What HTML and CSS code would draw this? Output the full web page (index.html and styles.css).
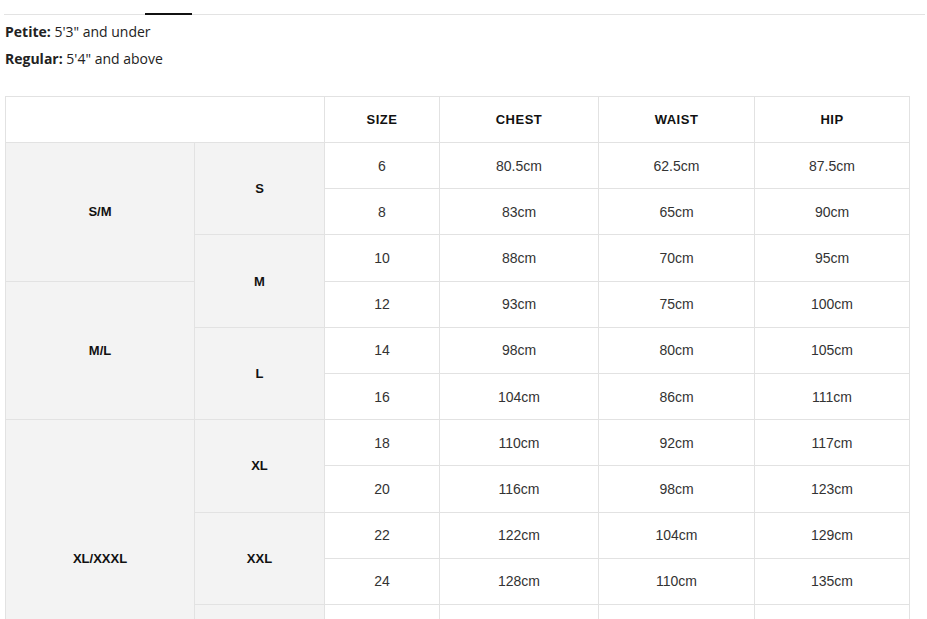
FILE: index.html
```html
<!DOCTYPE html>
<html>
<head>
<meta charset="utf-8">
<link rel="stylesheet" href="styles.css">
</head>
<body>
<div class="tabs"><span class="tab-active"></span></div>
<div class="fit">
  <p><b>Petite:</b> 5'3" and under</p>
  <p><b>Regular:</b> 5'4" and above</p>
</div>
<table class="chart">
  <colgroup>
    <col class="c1"><col class="c2"><col class="c3"><col class="c4"><col class="c5"><col class="c6">
  </colgroup>
  <tr class="head"><th colspan="2"></th><th>SIZE</th><th>CHEST</th><th>WAIST</th><th>HIP</th></tr>
  <tr><td class="grp" rowspan="3">S/M</td><td class="grp" rowspan="2">S</td><td>6</td><td>80.5cm</td><td>62.5cm</td><td>87.5cm</td></tr>
  <tr><td>8</td><td>83cm</td><td>65cm</td><td>90cm</td></tr>
  <tr><td class="grp" rowspan="2">M</td><td>10</td><td>88cm</td><td>70cm</td><td>95cm</td></tr>
  <tr><td class="grp" rowspan="3">M/L</td><td>12</td><td>93cm</td><td>75cm</td><td>100cm</td></tr>
  <tr><td class="grp" rowspan="2">L</td><td>14</td><td>98cm</td><td>80cm</td><td>105cm</td></tr>
  <tr><td>16</td><td>104cm</td><td>86cm</td><td>111cm</td></tr>
  <tr><td class="grp" rowspan="6">XL/XXXL</td><td class="grp" rowspan="2">XL</td><td>18</td><td>110cm</td><td>92cm</td><td>117cm</td></tr>
  <tr><td>20</td><td>116cm</td><td>98cm</td><td>123cm</td></tr>
  <tr><td class="grp" rowspan="2">XXL</td><td>22</td><td>122cm</td><td>104cm</td><td>129cm</td></tr>
  <tr><td>24</td><td>128cm</td><td>110cm</td><td>135cm</td></tr>
  <tr><td class="grp" rowspan="2"></td><td></td><td></td><td></td><td></td></tr>
  <tr><td></td><td></td><td></td><td></td></tr>
</table>
</body>
</html>
```
FILE: styles.css
```css
html, body {
  margin: 0;
  padding: 0;
  background: #fff;
}
body {
  font-family: "Liberation Sans", Arial, sans-serif;
  color: #222;
  overflow: hidden;
}
.tabs {
  margin: 13px 2px 0 4px;
  height: 1px;
  border-bottom: 1px solid #e3e3e3;
  position: relative;
}
.tab-active {
  position: absolute;
  left: 141px;
  top: 0;
  width: 47px;
  height: 2px;
  background: #111;
}
.fit {
  padding: 7px 0 0 5px;
  font-family: "Open Sans", "Noto Sans", sans-serif;
  font-size: 14px;
  color: #222;
}
.fit p {
  margin: 0 0 8px 0;
  line-height: 19px;
}
.fit b {
  font-weight: 700;
}
.chart {
  margin: 28px 0 0 5px;
  border-collapse: collapse;
  table-layout: fixed;
  width: 904px;
}
.c1 { width: 189px; }
.c2 { width: 130px; }
.c3 { width: 115px; }
.c4 { width: 159px; }
.c5 { width: 156px; }
.c6 { width: 155px; }
.chart th, .chart td {
  border: 1px solid #e2e2e2;
  text-align: center;
  vertical-align: middle;
  padding: 0;
}
.chart tr {
  height: 46.2px;
}
.chart tr.head {
  height: 46px;
}
.chart th {
  font-size: 13px;
  font-weight: 700;
  letter-spacing: 0.5px;
  color: #111;
}
.chart td {
  font-size: 14px;
  color: #333;
}
.chart td.grp {
  background: #f3f3f3;
  font-size: 13px;
  font-weight: 700;
  color: #111;
}
```
